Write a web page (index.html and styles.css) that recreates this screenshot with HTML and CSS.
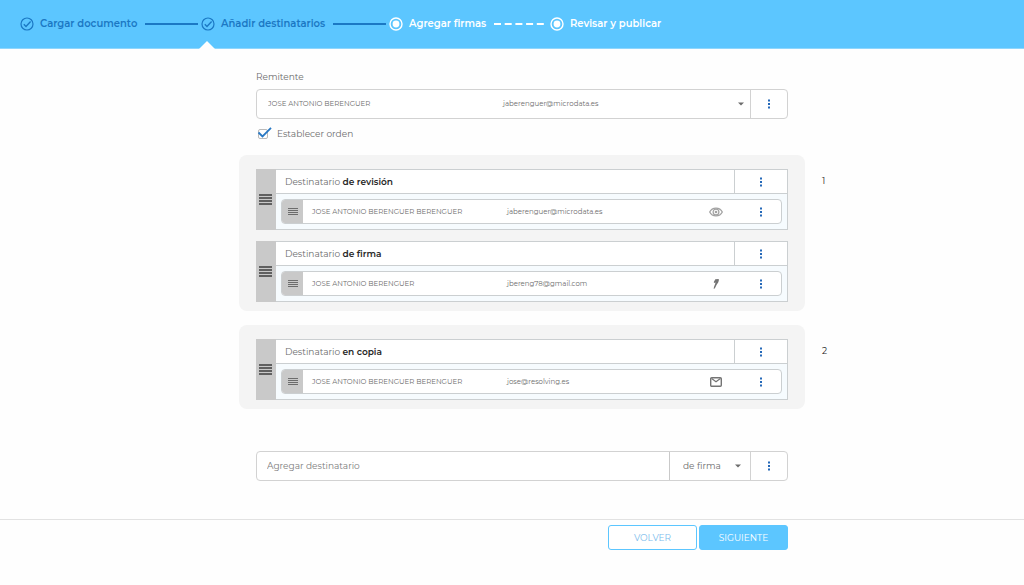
FILE: index.html
```html
<!DOCTYPE html>
<html lang="es">
<head>
<meta charset="utf-8">
<meta name="viewport" content="width=device-width, initial-scale=1">
<title>Añadir destinatarios</title>
<link rel="stylesheet" href="styles.css">
</head>
<body>
<svg class="sprite" aria-hidden="true">
  <symbol id="check" viewBox="0 0 14 14"><circle cx="7" cy="7" r="6" fill="none" stroke="currentColor" stroke-width="1.2"/><path d="M3.8 7.2 6 9.4 10.6 4.6" fill="none" stroke="currentColor" stroke-width="1.4"/></symbol>
  <symbol id="radio" viewBox="0 0 14 14"><circle cx="7" cy="7" r="6" fill="none" stroke="currentColor" stroke-width="1.4"/><circle cx="7" cy="7" r="3.4" fill="currentColor"/></symbol>
  <symbol id="dots" viewBox="0 0 4 10"><path d="M1 .5h2v2H1zM1 4h2v2H1zM1 7.5h2v2H1z" fill="currentColor"/></symbol>
  <symbol id="grip" viewBox="0 0 13 11"><path d="M0 1h13M0 4h13M0 7h13M0 10h13" stroke="currentColor" stroke-width="2"/></symbol>
  <symbol id="grip-small" viewBox="0 0 10 9"><path d="M0 1.500h10M0 3.500h10M0 5.500h10M0 7.500h10" stroke="currentColor" stroke-width="1"/></symbol>
  <symbol id="caret" viewBox="0 0 6 4"><path d="M0 .5h6L3 3.5z" fill="currentColor"/></symbol>
  <symbol id="eye" viewBox="0 0 14 10"><path d="M.7 5C3.2-.2 10.800-.2 13.300 5 10.800 10.200 3.200 10.200.7 5z" fill="none" stroke="currentColor" stroke-width="1.300"/><circle cx="7" cy="5" r="2.900" fill="none" stroke="currentColor" stroke-width="1.200"/><circle cx="7" cy="5" r="1.300" fill="currentColor"/></symbol>
  <symbol id="pen" viewBox="0 0 14 10"><path d="M6.300.3 9.400 0 10 .8 9.300 3.200 7.500 5.900 5.900 9.300 4.700 10 4.900 8.300 6.600 3.600 5 3.900 4.800 2.900z" fill="currentColor"/></symbol>
  <symbol id="mail" viewBox="0 0 14 10"><rect x="1.700" y=".8" width="10.600" height="8.400" rx="1" fill="none" stroke="currentColor" stroke-width="1.400"/><path d="M2.600 1.600 7 4.800 11.400 1.600" fill="none" stroke="currentColor" stroke-width="1.200"/></symbol>
</svg>

<header class="topbar">
  <ol class="steps">
    <li class="step step-done step-first"><svg class="step-icon"><use href="#check"/></svg><span>Cargar documento</span><span class="step-line"></span></li>
    <li class="step step-done step-current" aria-current="step"><svg class="step-icon"><use href="#check"/></svg><span>Añadir destinatarios</span><span class="step-line"></span></li>
    <li class="step step-third"><svg class="step-icon"><use href="#radio"/></svg><span>Agregar firmas</span><svg class="step-dashes" aria-hidden="true"><path d="M0 1H50" stroke="currentColor" stroke-width="2" stroke-dasharray="7 3.700"/></svg></li>
    <li class="step"><svg class="step-icon"><use href="#radio"/></svg><span>Revisar y publicar</span></li>
  </ol>
</header>

<main class="page">
  <section class="block sender">
    <label class="label" for="sender">Remitente</label>
    <div class="field">
      <div class="picker">
        <select class="picker-select" id="sender"><option>JOSE ANTONIO BERENGUER</option></select>
        <span class="picker-mail">jaberenguer@microdata.es</span>
        <svg class="caret"><use href="#caret"/></svg>
      </div>
      <button class="menu field-menu" type="button" aria-label="Opciones del remitente"><svg class="dots"><use href="#dots"/></svg></button>
    </div>
    <label class="order" for="order">
      <input class="order-box" id="order" type="checkbox" checked>
      <svg class="order-tick" viewBox="0 0 15 12" aria-hidden="true"><path d="M1.500 5.500 5.500 9.500 14 .8" fill="none" stroke="currentColor" stroke-width="1.800"/></svg>
      <span>Establecer orden</span>
    </label>
  </section>

  <section class="group">
    <article class="card">
      <button class="handle" type="button" aria-label="Mover grupo"><svg class="grip"><use href="#grip"/></svg></button>
      <div class="card-body">
        <div class="card-head"><h2 class="card-title">Destinatario <strong>de revisión</strong></h2><button class="menu card-menu" type="button" aria-label="Opciones"><svg class="dots"><use href="#dots"/></svg></button></div>
        <div class="card-list"><div class="person">
          <button class="person-handle" type="button" aria-label="Mover destinatario"><svg class="grip-small"><use href="#grip-small"/></svg></button>
          <span class="person-name">JOSE ANTONIO BERENGUER BERENGUER</span><span class="person-mail">jaberenguer@microdata.es</span>
          <svg class="kind kind-light"><use href="#eye"/></svg>
          <button class="menu" type="button" aria-label="Opciones"><svg class="dots"><use href="#dots"/></svg></button>
        </div></div>
      </div>
    </article>
    <article class="card">
      <button class="handle" type="button" aria-label="Mover grupo"><svg class="grip"><use href="#grip"/></svg></button>
      <div class="card-body">
        <div class="card-head"><h2 class="card-title">Destinatario <strong>de firma</strong></h2><button class="menu card-menu" type="button" aria-label="Opciones"><svg class="dots"><use href="#dots"/></svg></button></div>
        <div class="card-list"><div class="person">
          <button class="person-handle" type="button" aria-label="Mover destinatario"><svg class="grip-small"><use href="#grip-small"/></svg></button>
          <span class="person-name">JOSE ANTONIO BERENGUER</span><span class="person-mail">jbereng78@gmail.com</span>
          <svg class="kind"><use href="#pen"/></svg>
          <button class="menu" type="button" aria-label="Opciones"><svg class="dots"><use href="#dots"/></svg></button>
        </div></div>
      </div>
    </article>
  </section>
  <span class="order-number">1</span>

  <section class="group">
    <article class="card">
      <button class="handle" type="button" aria-label="Mover grupo"><svg class="grip"><use href="#grip"/></svg></button>
      <div class="card-body">
        <div class="card-head"><h2 class="card-title">Destinatario <strong>en copia</strong></h2><button class="menu card-menu" type="button" aria-label="Opciones"><svg class="dots"><use href="#dots"/></svg></button></div>
        <div class="card-list"><div class="person">
          <button class="person-handle" type="button" aria-label="Mover destinatario"><svg class="grip-small"><use href="#grip-small"/></svg></button>
          <span class="person-name">JOSE ANTONIO BERENGUER BERENGUER</span><span class="person-mail">jose@resolving.es</span>
          <svg class="kind"><use href="#mail"/></svg>
          <button class="menu" type="button" aria-label="Opciones"><svg class="dots"><use href="#dots"/></svg></button>
        </div></div>
      </div>
    </article>
  </section>
  <span class="order-number">2</span>

  <section class="block add">
    <div class="field">
      <input class="add-input" type="text" placeholder="Agregar destinatario" aria-label="Agregar destinatario">
      <div class="role">
        <select class="role-select" aria-label="Tipo de destinatario"><option>de firma</option></select>
        <svg class="caret"><use href="#caret"/></svg>
      </div>
      <button class="menu field-menu" type="button" aria-label="Opciones"><svg class="dots"><use href="#dots"/></svg></button>
    </div>
  </section>
</main>

<footer class="footer">
  <div class="actions">
    <button class="btn" type="button">VOLVER</button>
    <button class="btn btn-primary" type="button">SIGUIENTE</button>
  </div>
</footer>
</body>
</html>
```
FILE: styles.css
```css
* { box-sizing: border-box; }

body {
  margin: 0;
  background: #fefefe;
  color: #6c6c6c;
  font: 9px/12px Montserrat, Inter, "Open Sans", sans-serif;
}

button, input, select { font: inherit; color: inherit; margin: 0; }
button { padding: 0; border: 0; background: none; cursor: pointer; }
.sprite { position: absolute; width: 0; height: 0; }

/* Progress bar */
.topbar { background: #5cc6ff; border-bottom: 1px solid #8fd6fd; }
.steps {
  display: flex;
  margin: 0;
  padding: 0 20px;
  list-style: none;
  color: #fff;
  font-size: 10px;
  font-weight: 600;
}
.step { position: relative; display: flex; align-items: center; height: 48px; white-space: nowrap; }
.step-done { color: #1b78c4; }
.step-first { flex: 0 0 181px; }
.step-current { flex: 0 0 188px; }
.step-third { flex: 0 0 161px; }
.step-icon { flex: none; width: 14px; height: 14px; margin-right: 6px; }
.step-line { flex: 1; height: 2px; margin: 0 3px 0 8px; background: #1b78c4; }
.step-dashes { flex: none; width: 50px; height: 2px; margin: 0 6px 0 auto; }
.step-current::after {
  content: "";
  position: absolute;
  left: -2px;
  bottom: -1px;
  border: 8px solid transparent;
  border-top: 0;
  border-bottom-color: #fefefe;
}

/* Page columns: margin, content, order number */
.page {
  display: grid;
  grid-template-columns: 1fr minmax(0, 566px) 1fr;
  padding: 22px 0 0 20px;
}
.block, .group { grid-column: 2; }
.block { padding: 0 17px; }
.sender { padding-bottom: 15px; }
.label { display: block; margin-bottom: 6px; }

.field {
  display: flex;
  height: 30px;
  border: 1px solid #d2d2d2;
  border-radius: 4px;
  background: #fff;
}
.picker { flex: 1; display: grid; grid-template-columns: 235px 1fr 12px; align-items: center; padding-left: 11px; font-size: 7px; }
.picker-select {
  grid-area: 1 / 1 / 2 / 4;
  height: 28px;
  padding: 0;
  border: 0;
  background: none;
  appearance: none;
}
.picker-mail { grid-area: 1 / 2; pointer-events: none; }
.caret { grid-area: 1 / 3; width: 6px; height: 4px; pointer-events: none; }
.menu { display: flex; align-items: center; justify-content: center; color: #2468b8; }
.dots { width: 4px; height: 10px; }
.field-menu { width: 37px; border-left: 1px solid #d2d2d2; }

.order { position: relative; display: flex; align-items: center; gap: 9px; margin-top: 9px; padding-left: 2px; }
.order-box { appearance: none; width: 10px; height: 10px; border: 1px solid #bababa; border-radius: 2px; }
.order-tick { position: absolute; left: 1px; top: -1px; width: 15px; height: 12px; color: #2878c4; pointer-events: none; }
.order-box:not(:checked) + .order-tick { display: none; }

/* Recipient groups */
.group {
  display: grid;
  gap: 11px;
  margin-bottom: 14px;
  padding: 14px 17px 9px;
  border-radius: 8px;
  background: #f4f4f4;
}
.order-number { grid-column: 3; padding: 20px 0 0 17px; color: #1c1c1c; }
.card { display: flex; }
.handle { flex: none; width: 20px; background: #c9c9c9; color: #606060; }
.grip { display: block; width: 13px; height: 11px; margin: 0 auto 0 3px; }
.card-body { flex: 1; min-width: 0; border: 1px solid #cbcfd1; border-left: 0; background: #f6fbfe; }
.card-head { display: flex; height: 24px; border-bottom: 1px solid #cbcfd1; background: #fff; }
.card-title { flex: 1; margin: 0; padding: 0 9px; font: 400 9px/23px Montserrat, Inter, "Open Sans", sans-serif; }
.card-title strong { color: #282828; font-weight: 600; }
.card-menu { width: 53px; border-left: 1px solid #cbcfd1; }
.card-list { padding: 5px; }
.person {
  display: grid;
  grid-template-columns: 21px 195px 1fr 33px 38px;
  align-items: center;
  height: 25px;
  padding-right: 1px;
  border: 1px solid #cbcfd1;
  border-radius: 4px;
  background: #fff;
  font-size: 7px;
  overflow: hidden;
}
.person-handle { height: 23px; background: #c9c9c9; color: #6c6c6c; }
.grip-small { display: block; width: 10px; height: 9px; margin: 0 auto 0 6px; }
.person-name { padding-left: 9px; white-space: nowrap; }
.person-mail { padding-left: 9px; }
.kind { width: 14px; height: 10px; color: #747474; }
.kind-light { color: #a2a2a2; }
.person .menu { height: 23px; }

/* New recipient */
.add { padding-top: 28px; }
.add-input { flex: 1; min-width: 0; padding: 0 10px; border: 0; background: none; }
.add-input::placeholder { color: #7c7c7c; opacity: 1; }
.role { display: grid; grid-template-columns: 1fr 0 15px; align-items: center; width: 81px; padding-left: 13px; border-left: 1px solid #c9c9c9; }
.role-select { grid-area: 1 / 1 / 2 / 4; height: 28px; padding: 0; border: 0; background: none; appearance: none; }

.footer {
  display: grid;
  grid-template-columns: 1fr minmax(0, 566px) 1fr;
  margin-top: 38px;
  padding: 5px 0 35px 20px;
  border-top: 1px solid #e2e2e2;
}
.actions { grid-column: 2; display: flex; justify-content: flex-end; gap: 2px; padding-right: 17px; }
.btn { width: 89px; height: 25px; border: 1px solid #5cc6ff; border-radius: 3px; background: #fff; color: #7cbcec; }
.btn-primary { background: #5cc6ff; color: #fff; }
```
